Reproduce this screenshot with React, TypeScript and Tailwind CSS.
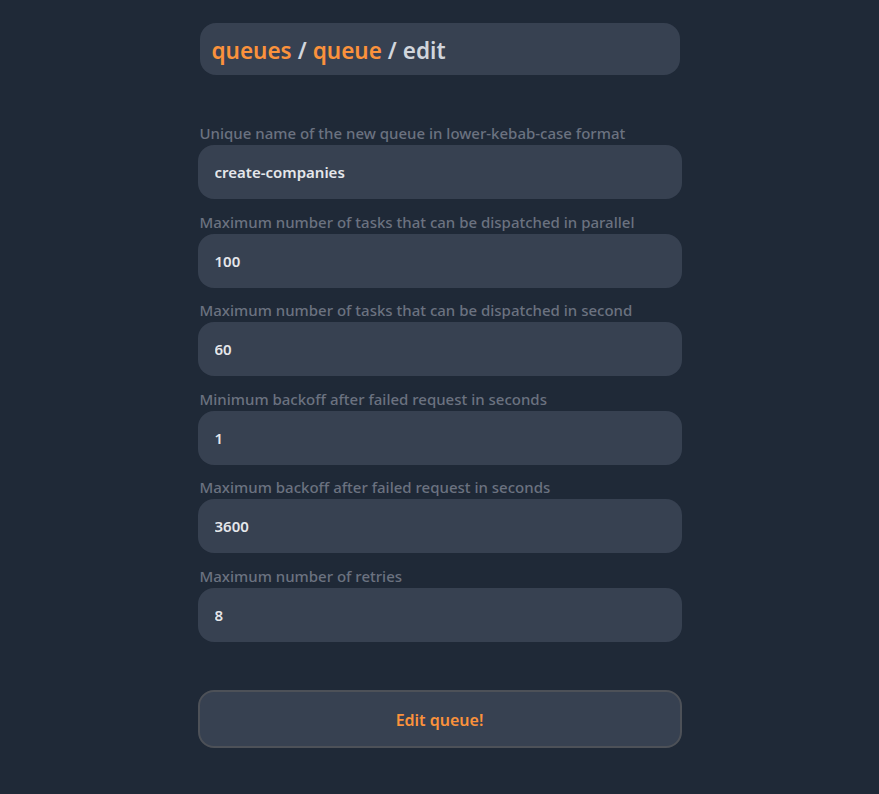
import { useState } from 'react'

interface Field {
  name: string
  label: string
  value: string
}

const fields: Field[] = [
  { name: 'name', label: 'Unique name of the new queue in lower-kebab-case format', value: 'create-companies' },
  { name: 'maxConcurrent', label: 'Maximum number of tasks that can be dispatched in parallel', value: '100' },
  { name: 'maxPerSecond', label: 'Maximum number of tasks that can be dispatched in second', value: '60' },
  { name: 'minBackoff', label: 'Minimum backoff after failed request in seconds', value: '1' },
  { name: 'maxBackoff', label: 'Maximum backoff after failed request in seconds', value: '3600' },
  { name: 'maxRetries', label: 'Maximum number of retries', value: '8' },
]

export default function App() {
  const [values, setValues] = useState<Record<string, string>>(
    Object.fromEntries(fields.map((f) => [f.name, f.value]))
  )

  return (
    <div
      className="min-h-[794px] bg-[#1f2937] flex justify-center"
      style={{ fontFamily: '"Noto Sans", "Open Sans", sans-serif' }}
    >
      <div className="w-[484px] pt-[23px] pb-12 flex flex-col">
        {/* Breadcrumb */}
        <div className="mx-[2px] h-[52px] rounded-2xl bg-[#374151] px-[12px] pt-[3px] flex items-center text-[22.5px] font-semibold">
          <span className="text-[#fb923c]">queues</span>
          <span className="text-gray-300 mx-[6px]">/</span>
          <span className="text-[#fb923c]">queue</span>
          <span className="text-gray-300 mx-[6px]">/</span>
          <span className="text-gray-300">edit</span>
        </div>

        <form className="mt-[50px] flex flex-col gap-[14.6px]" onSubmit={(e) => e.preventDefault()}>
          {fields.map((field) => (
            <label key={field.name} className="flex flex-col">
              <span className="px-[2px] pb-[3px] text-[15px] leading-[17px] font-medium text-[#6b7280]">{field.label}</span>
              <input
                value={values[field.name]}
                onChange={(e) => setValues({ ...values, [field.name]: e.target.value })}
                className="h-[54px] rounded-2xl bg-[#374151] px-[17px] text-[15px] font-semibold text-gray-200 outline-none"
              />
            </label>
          ))}

          <button
            type="submit"
            className="mt-[33px] h-[58px] rounded-2xl border-2 border-[#4d5158] bg-[#374151] pt-[3px] text-[16px] font-semibold text-[#fb923c]"
          >
            Edit queue!
          </button>
        </form>
      </div>
    </div>
  )
}
